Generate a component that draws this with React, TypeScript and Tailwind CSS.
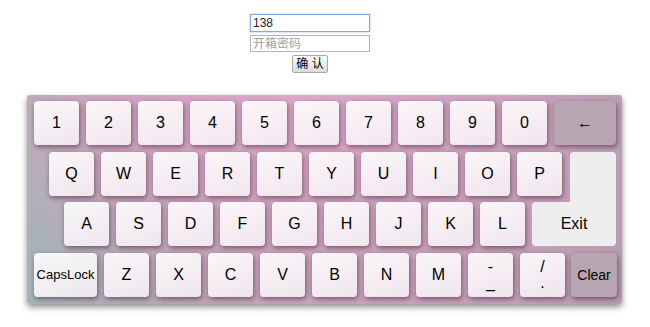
import * as React from "react"

const font = { fontFamily: '"Liberation Sans", Arial, "Noto Sans CJK SC", sans-serif' }

const keyBase =
  "flex h-[44px] shrink-0 items-center justify-center rounded-[4px] text-black shadow-[1px_2px_5px_rgba(40,10,30,0.5)]"
const lightBg = "bg-[linear-gradient(160deg,rgba(255,255,255,0.9),rgba(250,244,249,0.82))]"

function Key({
  label,
  width = "w-[45px]",
  size = "text-[16px]",
  bg = lightBg,
}: {
  label: React.ReactNode
  width?: string
  size?: string
  bg?: string
}) {
  return <div className={`${keyBase} ${width} ${size} ${bg}`}>{label}</div>
}

function Stack({ top, bottom }: { top: string; bottom: string }) {
  return (
    <div className="flex flex-col items-center gap-[4px] leading-[12px]">
      <span>{top}</span>
      <span>{bottom}</span>
    </div>
  )
}

export default function App() {
  const row1 = ["1", "2", "3", "4", "5", "6", "7", "8", "9", "0"]
  const row2 = ["Q", "W", "E", "R", "T", "Y", "U", "I", "O", "P"]
  const row3 = ["A", "S", "D", "F", "G", "H", "J", "K", "L"]
  const row4 = ["Z", "X", "C", "V", "B", "N", "M"]

  return (
    <div className="min-h-[327px] w-[650px] bg-white" style={font}>
      {/* password form */}
      <div className="flex w-[620px] flex-col items-center pt-[14px]">
        <input
          defaultValue="138"
          className="h-[18px] w-[120px] border border-[#7ea9e8] bg-white px-[2px] text-[12px] text-[#222] outline-none shadow-[0_0_2px_rgba(90,150,230,0.6)]"
        />
        <input
          placeholder="开箱密码"
          className="mt-[3px] h-[17px] w-[120px] border border-[#b5b5b5] bg-white px-[2px] text-[12px] text-[#222] outline-none placeholder:text-[#a0a0a0]"
        />
        <button className="mt-[3px] h-[18px] w-[36px] rounded-[2px] border border-[#a8a8a8] bg-[linear-gradient(#fafafa,#dcdcdc)] text-[12px] leading-[16px] text-black">
          确 认
        </button>
      </div>

      {/* keyboard */}
      <div className="ml-[27px] mt-[22px] w-[595px] rounded-[3px] bg-[radial-gradient(ellipse_at_45%_0%,#dca8c8_0%,#cfa3bf_40%,rgba(207,163,191,0)_75%),linear-gradient(90deg,#a6b3b9_0%,#bba6b6_30%,#c9a2bc_55%,#c3a0b8_80%,#b99db3_100%)] pb-[7px] pl-[7px] pr-[6px] pt-[6px] shadow-[0_3px_6px_rgba(0,0,0,0.45)]">
        <div className="flex gap-[7px]">
          {row1.map((k) => (
            <Key key={k} label={k} />
          ))}
          <Key label="←" width="w-[62px]" bg="bg-[#b7a5b2]" />
        </div>

        <div className="mt-[7px] flex gap-[7px] pl-[15px]">
          {row2.map((k) => (
            <Key key={k} label={k} />
          ))}
          <div className="-mb-[7px] ml-[1px] h-[51px] w-[46px] rounded-t-[4px] bg-[#eeeeee]" />
        </div>

        <div className="mt-[6px] flex gap-[7px] pl-[30px]">
          {row3.map((k) => (
            <Key key={k} label={k} />
          ))}
          <div className="flex h-[44px] w-[84px] items-center justify-center rounded-[4px] rounded-tr-none bg-[#eeeeee] text-[16px] text-black">
            Exit
          </div>
        </div>

        <div className="mt-[7px] flex gap-[7px]">
          <Key label="CapsLock" width="w-[63px]" size="text-[13px]" />
          {row4.map((k) => (
            <Key key={k} label={k} />
          ))}
          <Key label={<Stack top="-" bottom="_" />} />
          <Key label={<Stack top="/" bottom="." />} />
          <div className="ml-[-1px] flex">
            <Key label="Clear" width="w-[46px]" size="text-[14px]" bg="bg-[#b7a5b2]" />
          </div>
        </div>
      </div>
    </div>
  )
}
